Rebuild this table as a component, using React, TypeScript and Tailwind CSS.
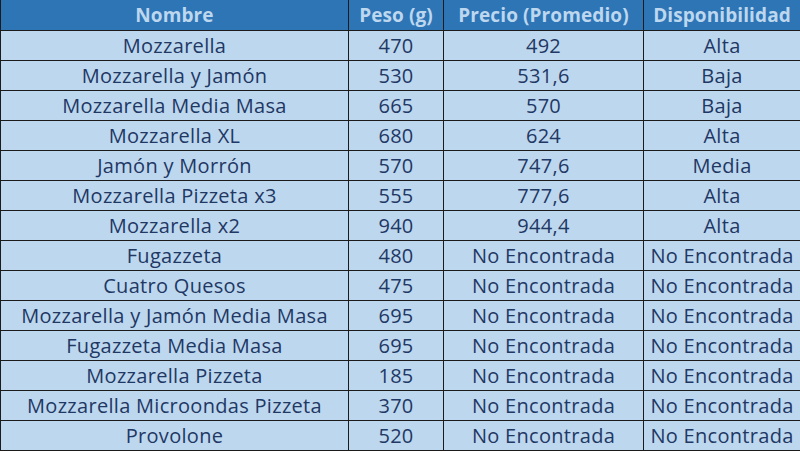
const ROWS: [string, string, string, string][] = [
  ["Mozzarella", "470", "492", "Alta"],
  ["Mozzarella y Jamón", "530", "531,6", "Baja"],
  ["Mozzarella Media Masa", "665", "570", "Baja"],
  ["Mozzarella XL", "680", "624", "Alta"],
  ["Jamón y Morrón", "570", "747,6", "Media"],
  ["Mozzarella Pizzeta x3", "555", "777,6", "Alta"],
  ["Mozzarella x2", "940", "944,4", "Alta"],
  ["Fugazzeta", "480", "No Encontrada", "No Encontrada"],
  ["Cuatro Quesos", "475", "No Encontrada", "No Encontrada"],
  ["Mozzarella y Jamón Media Masa", "695", "No Encontrada", "No Encontrada"],
  ["Fugazzeta Media Masa", "695", "No Encontrada", "No Encontrada"],
  ["Mozzarella Pizzeta", "185", "No Encontrada", "No Encontrada"],
  ["Mozzarella Microondas Pizzeta", "370", "No Encontrada", "No Encontrada"],
  ["Provolone", "520", "No Encontrada", "No Encontrada"],
];

const HEADERS = ["Nombre", "Peso (g)", "Precio (Promedio)", "Disponibilidad"];

export default function App() {
  return (
    <div className="h-[452px] w-[800px] overflow-hidden bg-white font-['Open_Sans',sans-serif]">
      <table className="w-[800px] table-fixed border-collapse text-center">
        <colgroup>
          <col className="w-[348px]" />
          <col className="w-[95px]" />
          <col className="w-[200px]" />
          <col className="w-[157px]" />
        </colgroup>
        <thead>
          <tr className="h-[30px] bg-[#2e75b6]">
            {HEADERS.map((h) => (
              <th
                key={h}
                className="border-x border-b border-[#1b1b1b] p-0 pt-px text-[19px] font-bold leading-none tracking-[0.1px] text-[#bdd7ee]"
              >
                {h}
              </th>
            ))}
          </tr>
        </thead>
        <tbody>
          {ROWS.map((r) => (
            <tr key={r[0]} className="h-[30px] bg-[#bdd7ee]">
              {r.map((c, i) => (
                <td
                  key={i}
                  className="border border-[#1b1b1b] p-0 pt-[2px] text-[20px] leading-none tracking-[0.3px] text-[#1f3864]"
                >
                  {c}
                </td>
              ))}
            </tr>
          ))}
        </tbody>
      </table>
    </div>
  );
}
